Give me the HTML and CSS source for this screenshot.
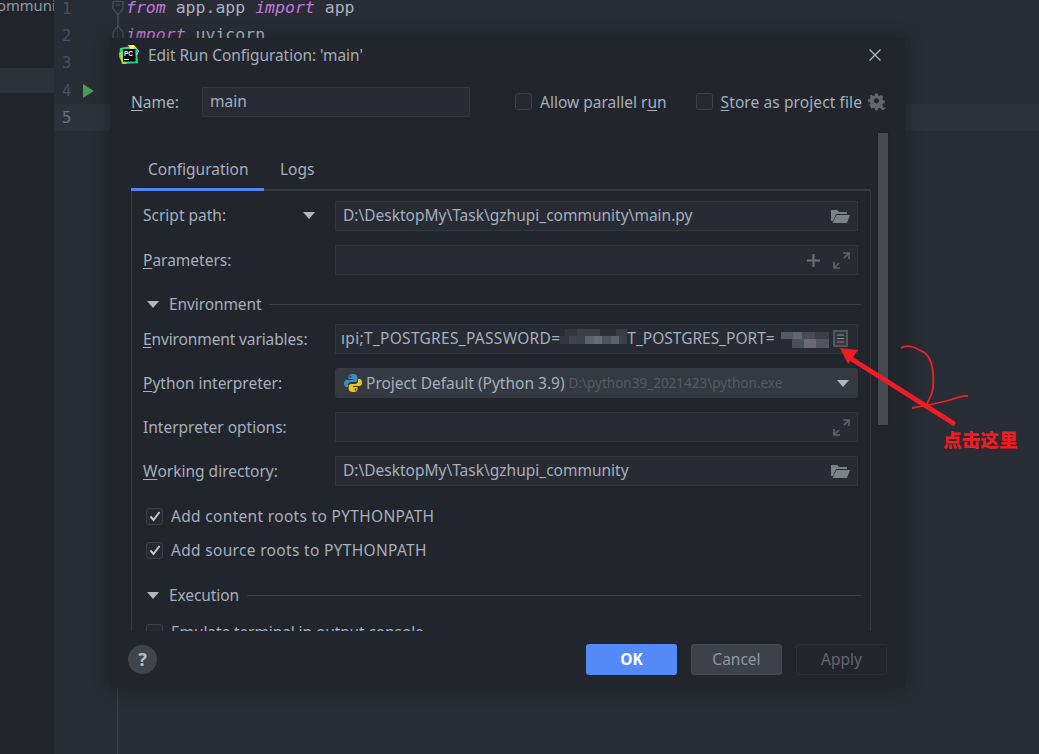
FILE: index.html
```html
<!DOCTYPE html>
<html lang="en">
<head>
<meta charset="utf-8">
<title>Edit Run Configuration</title>
<link rel="stylesheet" href="styles.css">
</head>
<body>
<div class="ide">
  <aside class="sidebar">
    <div class="tree-name">ommuni</div>
    <div class="tree-selected"></div>
  </aside>
  <div class="gutter">
    <div class="ln">1</div>
    <div class="ln">2</div>
    <div class="ln">3</div>
    <div class="ln"><span>4</span><svg class="run" width="11" height="14" viewBox="0 0 11 14"><path d="M0 0 L11 7 L0 14Z" fill="#499c54"/></svg></div>
    <div class="ln current">5</div>
    <svg class="fold" width="14" height="40" viewBox="0 0 14 40"><path d="M2 1.500h10v7L7 15 2 8.500ZM4.500 5h5M7 15v11M7 26 2 32.500V40M7 26l5 6.500V40" fill="#282c34" stroke="#4b5059" stroke-width="1.200"/></svg>
  </div>
  <main class="editor">
    <div class="code"><em>from</em> app.app <em>import</em> app</div>
    <div class="code"><em>import</em> uvicorn</div>
    <div class="code"></div>
    <div class="code"></div>
    <div class="code current"></div>
  </main>
</div>

<section class="dialog">
  <header class="titlebar">
    <svg class="logo" width="20" height="20" viewBox="0 0 20 20">
      <path d="M1 3 L13 1 L18 6 L19 18 L4 19 L0 12Z" fill="#21d789"/>
      <path d="M9 0 L15 0 L20 6 L18 10 L14 8Z" fill="#fcf84a"/>
      <path d="M0 8 L5 6 L8 19 L3 19Z" fill="#9fd83c"/>
      <path d="M15 2 L20 6 L18 10Z" fill="#07c3f2"/>
      <rect x="4" y="4" width="12.500" height="12.500" fill="#000"/>
      <text x="5" y="10.500" class="logo-text">PC</text>
      <rect x="5" y="14" width="5" height="1" fill="#fff"/>
    </svg>
    <h1 class="title">Edit Run Configuration: 'main'</h1>
    <svg class="close" width="14" height="14" viewBox="0 0 14 14"><path d="M1.500 1.500 L12.500 12.500 M12.500 1.500 L1.500 12.500" stroke="#b4b8bf" stroke-width="1.300"/></svg>
  </header>

  <div class="name-row">
    <label class="name-label"><u>N</u>ame:</label>
    <div class="field name-field">main</div>
    <span class="check top-check"><i class="box"></i>Allow parallel r<u>u</u>n</span>
    <span class="check store-check"><i class="box"></i><span><u>S</u>tore as project file</span></span>
    <svg class="gear" width="18" height="18" viewBox="0 0 18 18"><path fill="#62666c" fill-rule="evenodd" d="M6.500 0h3l.4 2.100 1.500.6L13.200 1.500l2.100 2.100-1.200 1.800.6 1.500 2.100.4v3l-2.100.4-.6 1.500 1.200 1.800-2.100 2.100-1.800-1.200-1.500.6-.4 2.100h-3l-.4-2.100-1.500-.6-1.800 1.200L.7 12.400l1.200-1.800-.6-1.500L-.8 8.700v-3l2.100-.4.6-1.500L.7 2l2.100-.5 1.800 1.200 1.500-.6ZM8 5a2.700 2.700 0 1 0 .01 0Z" transform="translate(.8 .5) scale(.95)"/><path d="M12 14.500h6l-3 3Z" fill="#62666c"/></svg>
  </div>

  <div class="body-wrap">
    <div class="body-main">
      <nav class="tabs">
        <span class="tab active">Configuration</span>
        <span class="tab">Logs</span>
      </nav>
      <div class="panel">
        <div class="row">
          <span class="lbl lbl-drop">Script path:<i class="tri"></i></span>
          <div class="field">D:\DesktopMy\Task\gzhupi_community\main.py
            <svg class="ficon" width="19" height="15" viewBox="0 0 19 15"><path d="M0 2h6l2 2h8v2H5L2 13H0Z M5.500 7H19l-3 8H1.500Z" fill="#7d8288"/></svg>
          </div>
        </div>
        <div class="row params">
          <span class="lbl"><u>P</u>arameters:</span>
          <div class="field">
            <svg class="ficon plus" width="13" height="13" viewBox="0 0 13 13"><path d="M6.500 0v13M0 6.500h13" stroke="#6e7278" stroke-width="2"/></svg>
            <svg class="ficon" width="17" height="17" viewBox="0 0 17 17"><path d="M10 1h6v6M16 1 11 6M7 16H1v-6M1 16l5-5" fill="none" stroke="#5f6369" stroke-width="1.600"/></svg>
          </div>
        </div>
        <div class="group-head env"><i class="tri"></i><span>Environment</span><b></b></div>
        <div class="row envvars">
          <span class="lbl lbl-env"><u>E</u>nvironment variables:</span>
          <div class="field env-field">
            <span class="env-text">ıpi;T_POSTGRES_PASSWORD=<i class="blur b1"></i><span class="env-port">T_POSTGRES_PORT=</span><i class="blur b2"></i></span>
            <span class="doc-btn"><svg width="11" height="13" viewBox="0 0 11 13"><path d="M0 0h11v13H0Z" fill="#33363c"/><path d="M2 3h7M2 6.500h7M2 10h7" stroke="#888c92" stroke-width="1"/></svg></span>
          </div>
        </div>
        <div class="row interp">
          <span class="lbl"><u>P</u>ython interpreter:</span>
          <div class="field combo">
            <svg class="py" width="18" height="18" viewBox="0 0 18 18"><path d="M9 0C5 0 4.500 1.500 4.500 3v2H9v1H2.500C1 6 0 7.500 0 9.500S1 13 2.500 13H4v-2.300C4 9 5.500 8 7 8h4c1.300 0 2.300-1 2.300-2.300V3C13.300 1 11.500 0 9 0ZM6.500 1.500a1 1 0 1 1 0 2 1 1 0 0 1 0-2Z" fill="#3c8dbc"/><path d="M9 18c4 0 4.500-1.500 4.500-3v-2H9v-1h6.500c1.500 0 2.500-1.500 2.500-3.500S17 5 15.500 5H14v2.300C14 9 12.500 10 11 10H7c-1.300 0-2.300 1-2.300 2.300V15C4.700 17 6.500 18 9 18Zm2.500-1.500a1 1 0 1 1 0-2 1 1 0 0 1 0 2Z" fill="#f0c419"/></svg>
            <span class="combo-main">Project Default (Python 3.9)</span>
            <span class="combo-path">D:\python39_2021423\python.exe</span>
            <i class="tri tri-combo"></i>
          </div>
        </div>
        <div class="row opts">
          <span class="lbl">Interpreter options:</span>
          <div class="field">
            <svg class="ficon" width="17" height="17" viewBox="0 0 17 17"><path d="M10 1h6v6M16 1 11 6M7 16H1v-6M1 16l5-5" fill="none" stroke="#5f6369" stroke-width="1.600"/></svg>
          </div>
        </div>
        <div class="row workdir">
          <span class="lbl"><u>W</u>orking directory:</span>
          <div class="field">D:\DesktopMy\Task\gzhupi_community
            <svg class="ficon" width="19" height="15" viewBox="0 0 19 15"><path d="M0 2h6l2 2h8v2H5L2 13H0Z M5.500 7H19l-3 8H1.500Z" fill="#7d8288"/></svg>
          </div>
        </div>
        <div class="check-row c1"><span class="check"><i class="box on"><svg width="12" height="11" viewBox="0 0 12 11"><path d="M1.500 5.500 4.500 9 10.500 1" fill="none" stroke="#c8cacd" stroke-width="2"/></svg></i>Add content roots to PYTHONPATH</span></div>
        <div class="check-row c2"><span class="check"><i class="box on"><svg width="12" height="11" viewBox="0 0 12 11"><path d="M1.500 5.500 4.500 9 10.500 1" fill="none" stroke="#c8cacd" stroke-width="2"/></svg></i>Add source roots to PYTHONPATH</span></div>
        <div class="group-head exec"><i class="tri"></i><span>Execution</span><b></b></div>
        <div class="check-row c3"><span class="check"><i class="box"></i>Emulate terminal in output console</span></div>
      </div>
    </div>
    <div class="scrollbar"></div>
  </div>

  <footer class="footer">
    <span class="help">?</span>
    <div class="buttons">
      <span class="btn ok">OK</span>
      <span class="btn cancel">Cancel</span>
      <span class="btn apply">Apply</span>
    </div>
  </footer>
</section>

<svg class="annot" width="1039" height="754" viewBox="0 0 1039 754">
  <path d="M901 348C908 344 915 347 925 353 933 360 934 375 933 388 932 397 927 402 925 408" fill="none" stroke="#e8242a" stroke-width="1.800"/>
  <path d="M912 408 C925 406 938 403 950 400 C957 398 962 395 968 396" fill="none" stroke="#e8242a" stroke-width="1.800"/>
  <path d="M953 423 L850 358" stroke="#ee1c25" stroke-width="5" stroke-linecap="round"/>
  <path d="M840 348 L858 350 L848 364Z" fill="#ee1c25"/>
  <text x="943" y="447" class="annot-text">点击这里</text>
</svg>
</body>
</html>
```
FILE: styles.css
```css
* { box-sizing: border-box; }
html, body { margin: 0; height: 100%; }
body {
  position: relative;
  width: 1039px;
  height: 754px;
  overflow: hidden;
  background: #282c34;
  font-family: "Noto Sans", "Open Sans", sans-serif;
  font-size: 15.500px;
  color: #a9b3c0;
}
u { text-underline-offset: 2px; }
i { font-style: normal; }

.ide { display: flex; height: 754px; }
.sidebar { width: 54px; flex: none; background: #21252b; overflow: hidden; }
.tree-name { margin-left: -3px; margin-top: -5px; height: 73px; color: #8f98a4; white-space: nowrap; font-size: 14.800px; }
.tree-selected { height: 25px; background: #2c313a; }
.gutter { position: relative; width: 64px; flex: none; border-right: 1px solid #3a3e46; color: #495162; font-family: "DejaVu Sans Mono", monospace; font-size: 15.500px; }
.ln { height: 27.400px; padding: 2px 0 0 8px; display: flex; align-items: center; gap: 12px; }
.ln:first-child { margin-top: -6px; }
.ln.current { background: #2c313a; color: #6b7280; }
.fold { position: absolute; left: 57px; top: 0; }
.editor { flex: 1; font-family: "DejaVu Sans Mono", monospace; font-size: 16.500px; color: #abb2bf; }
.code { height: 27.400px; line-height: 27.400px; padding-left: 8px; white-space: pre; }
.code:first-child { margin-top: -6px; }
.code em { color: #c678dd; }
.code.current { background: #2c313a; }

.dialog {
  position: absolute;
  left: 110px;
  top: 38px;
  width: 795px;
  height: 650px;
  background: #22252c;
  box-shadow: 0 0 16px rgba(0,0,0,.25);
  display: flex;
  flex-direction: column;
}
.titlebar { height: 36px; display: flex; align-items: center; padding: 0 23px 2px 9px; flex: none; }
.logo { flex: none; }
.logo-text { font: bold 6.500px "Liberation Sans", sans-serif; fill: #fff; }
.title { font-size: 15.400px; font-weight: 400; margin: 0 0 0 9px; color: #a5aebb; flex: 1; }
.name-row { height: 54px; padding: 1px 0 0 21px; display: flex; align-items: center; flex: none; }
.name-label { width: 71px; flex: none; }
.field {
  position: relative;
  height: 30px;
  background: #282b33;
  border: 1px solid #31353e;
  flex: 1;
  padding-left: 7px;
  line-height: 27px;
  white-space: nowrap;
  overflow: hidden;
  color: #a5afbd;
}
.name-field { flex: none; width: 268px; margin-right: 45px; }
.check { display: inline-flex; align-items: center; color: #a5afbd; white-space: nowrap; }
.box { width: 17px; height: 17px; border: 1px solid #3b404a; border-radius: 3px; background: #262932; margin-right: 8px; display: inline-flex; align-items: center; justify-content: center; flex: none; }
.top-check { margin-right: 29px; }
.store-check { letter-spacing: .1px; }
.gear { margin-left: 6px; margin-top: 1px; }

.body-wrap { flex: 1; display: flex; padding-left: 21px; overflow: hidden; min-height: 0; position: relative; }
.body-main { width: 740px; flex: none; overflow: hidden; display: flex; flex-direction: column; }
.tabs { height: 63px; display: flex; align-items: flex-start; padding-top: 30px; flex: none; }
.tab { height: 33px; padding: 0 16px; color: #a5afbd; line-height: 22px; }
.tab.active { position: relative; z-index: 1; width: 133px; padding-left: 17px; border-bottom: 3px solid #4f85ef; }
.panel { flex: 1; border: 1px solid #363a43; border-bottom: 0; border-top-width: 2px; padding: 10px 12px 0 11px; overflow: hidden; min-height: 0; margin-top: -2px; }

.row { display: flex; align-items: center; height: 30px; }
.lbl { width: 192px; flex: none; display: flex; align-items: center; color: #a5afbd; white-space: pre; }
.lbl-env { letter-spacing: -.12px; }
.lbl-drop { padding-bottom: 2px; }
.lbl-drop .tri { margin-left: auto; margin-right: 20px; }
.params { margin-top: 14px; }
.group-head { display: flex; align-items: center; height: 20px; color: #a5afbd; margin: 0 -3px 0 4px; }
.group-head span { margin: 0 8px 0 10px; letter-spacing: -.1px; }
.group-head b { flex: 1; height: 1px; background: #3a3e46; }
.env { margin-top: 19px; }
.envvars { margin-top: 10px; }
.interp { margin-top: 14px; }
.opts { margin-top: 14px; }
.workdir { margin-top: 14px; }
.tri { display: inline-block; width: 0; height: 0; border-left: 6px solid transparent; border-right: 6px solid transparent; border-top: 7px solid #b4b8be; flex: none; }
.ficon { position: absolute; right: 7px; top: 6px; }
.ficon.plus { right: 37px; top: 8px; }
.env-field { padding-left: 5px; }
.env-text { letter-spacing: .3px; }
.env-port { letter-spacing: 0; }
.blur { display: inline-block; height: 22px; vertical-align: -7px; }
.b1 {
  width: 67px;
  background:
    linear-gradient(90deg, #33363e 0 14%, #45434c 14% 24%, #3f4149 24% 38%, #5e626c 38% 50%, #686c75 50% 62%, #50535d 62% 76%, #5e626c 76% 88%, #3d3f47 88% 100%) 0 7px / 100% 8px no-repeat,
    linear-gradient(90deg, transparent 0 8%, #34363e 8% 26%, #3d3f47 26% 60%, #2c2e36 60% 84%, #3a3b43 84% 100%) 0 0 / 100% 7px no-repeat;
}
.b2 {
  width: 48px;
  margin-left: 6px;
  background:
    linear-gradient(90deg, #555963 0 24%, #5d6672 24% 44%, #4a4a54 44% 70%, #3e3e48 70% 100%) 0 3px / 100% 7px no-repeat,
    linear-gradient(90deg, transparent 0 22%, #4a4f58 22% 48%, #6a6a74 48% 72%, #54545e 72% 100%) 0 10px / 100% 9px no-repeat;
}
.doc-btn { position: absolute; right: 9px; top: 5px; width: 15px; height: 17px; background: #51555c; display: flex; align-items: center; justify-content: center; }
.combo { background: #353941; border-color: #353941; border-radius: 3px; display: flex; align-items: center; padding-left: 8px; }
.py { flex: none; }
.combo-main { margin-left: 4px; }
.combo-path { margin-left: 4px; font-size: 13.500px; color: #555a64; }
.tri-combo { position: absolute; right: 8px; top: 11px; }
.check-row { height: 24px; display: flex; align-items: center; margin-left: 3px; letter-spacing: .32px; }
.c1 { margin-top: 18px; }
.c2 { margin-top: 10px; }
.c3 { margin-top: 15px; letter-spacing: -.1px; }
.exec { margin-top: 23px; }

.scrollbar { position: absolute; left: 768px; top: 5px; width: 10px; height: 292px; background: #474a50; outline: 1px solid #1e2126; }

.footer { height: 57px; flex: none; display: flex; align-items: center; padding: 0 18px; justify-content: space-between; }
.help { width: 29px; height: 29px; border-radius: 50%; background: #41444b; color: #b9bcc1; font-weight: 700; display: flex; align-items: center; justify-content: center; font-size: 18px; margin-bottom: 1px; }
.buttons { display: flex; gap: 14px; margin-bottom: 1px; }
.btn { width: 91px; height: 31px; border-radius: 3px; display: flex; align-items: center; justify-content: center; }
.ok { background: #548af7; color: #fff; font-weight: 700; }
.cancel { background: #3e4149; border: 1px solid #454951; color: #8e96a2; }
.apply { background: transparent; border: 1px solid #2c2f36; color: #62666d; }

.annot { position: absolute; left: 0; top: 0; pointer-events: none; }
.annot-text { font: 900 18.700px "Noto Sans CJK SC", sans-serif; fill: #ee1c25; }
```
